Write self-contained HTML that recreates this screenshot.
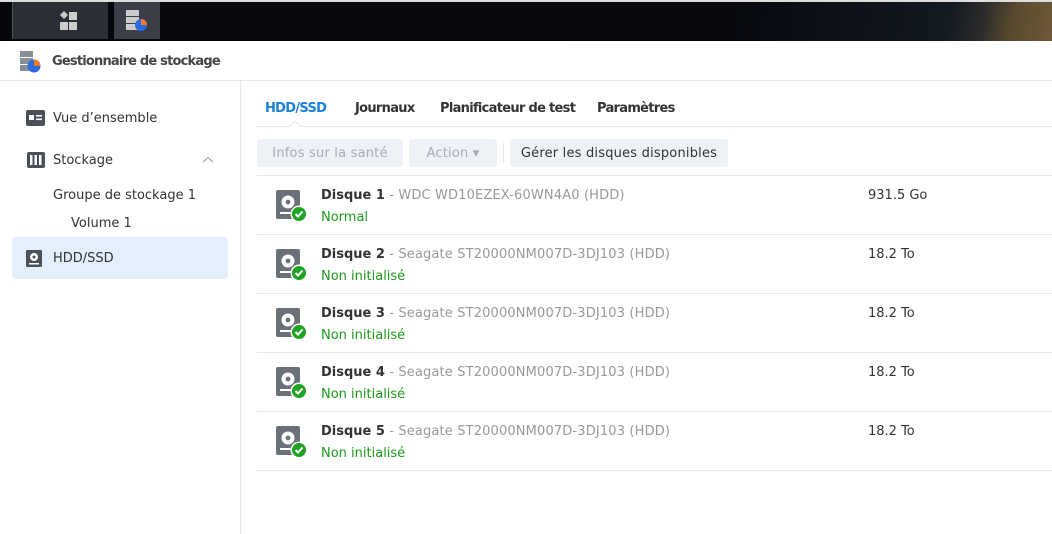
<!DOCTYPE html>
<html><head><meta charset="utf-8"><style>
*{margin:0;padding:0;box-sizing:border-box}
body{width:1052px;height:534px;overflow:hidden;background:#fff;font-family:"DejaVu Sans","Liberation Sans",sans-serif;font-size:13px;color:#333;position:relative}
.top{position:absolute;left:0;top:0;width:1052px;height:41px;background:linear-gradient(100deg,#05070c 0%,#07090f 70%,#141a22 90%,#2a2a2a 93%,#5a4a2e 96%,#6b5836 100%);border-top:2px solid #ddd}
.tb{position:absolute;top:2px;height:37px;background:#2a2e35}
.a{position:absolute}
.sep{position:absolute;background:#e6e8eb}
.nav{position:absolute;left:53px;font-size:13px;color:#333}
.tab{position:absolute;top:101px;font-weight:bold;font-size:13px;color:#333;letter-spacing:-0.7px}
.btn{position:absolute;top:139px;height:28px;border-radius:3px;background:#eef1f5;line-height:29px;text-align:center;font-size:13px;letter-spacing:0.2px}
.row .t{position:absolute;left:321px;font-size:13px;color:#999;letter-spacing:0.15px}
.row .t b{color:#333;letter-spacing:0}
.row .s{position:absolute;left:321px;color:#1a9b1a}
.row .z{position:absolute;left:868px;color:#333}
</style></head><body>
<div class="top"></div>
<div class="tb" style="left:12px;width:96px;border-left:1px solid #555"></div>
<svg class="a" style="left:59px;top:11px" width="20" height="20"><rect x="10" y="1" width="8" height="8" fill="#ccc"/><path d="M5 0L9 4L5 8L1 4Z" fill="#ccc"/><rect x="1" y="11" width="8" height="8" fill="#ccc"/><rect x="10" y="11" width="8" height="8" fill="#ccc"/></svg>
<div class="tb" style="left:114px;width:46px;background:#3a3f47"></div>
<svg class="a" style="left:124px;top:9px" width="26" height="24"><rect x="2" y="1" width="13" height="6" fill="#ccc"/><rect x="2" y="8" width="13" height="6" fill="#ccc"/><rect x="2" y="15" width="13" height="6" fill="#ccc"/><circle cx="17" cy="16" r="6" fill="#2a6be0"/><path d="M17 10A6 6 0 0 1 23 16H17Z" fill="#f07a2a"/></svg>
<svg class="a" style="left:18px;top:50px" width="26" height="24"><rect x="2" y="1" width="13" height="6" fill="#8a8f96"/><rect x="2" y="8" width="13" height="6" fill="#8a8f96"/><rect x="2" y="15" width="13" height="6" fill="#8a8f96"/><circle cx="16" cy="16" r="6.5" fill="#2a6be0"/><path d="M16 9.5A6.5 6.5 0 0 1 22.5 16H16Z" fill="#f07a2a"/></svg>
<div class="a" style="left:52px;top:54px;font-weight:bold;color:#444;letter-spacing:-0.8px">Gestionnaire de stockage</div>
<div class="sep" style="left:0;top:80px;width:1052px;height:1px"></div>
<div class="sep" style="left:240px;top:81px;width:1px;height:453px"></div>
<svg class="a" style="left:26px;top:110px" width="19" height="16"><rect x="0" y="0" width="19" height="16" rx="2" fill="#4b5058"/><rect x="3" y="5" width="5" height="5" fill="#fff"/><rect x="10" y="5" width="6" height="1.6" fill="#fff"/><rect x="10" y="8.5" width="6" height="1.6" fill="#fff"/></svg>
<div class="nav" style="top:111px">Vue d’ensemble</div>
<svg class="a" style="left:27px;top:152px" width="18" height="16"><rect width="18" height="16" rx="2" fill="#4b5058"/><rect x="3" y="3" width="2.5" height="10" fill="#fff"/><rect x="7.5" y="3" width="2.5" height="10" fill="#fff"/><rect x="12" y="3" width="2.5" height="10" fill="#fff"/></svg>
<div class="nav" style="top:153px">Stockage</div>
<svg class="a" style="left:202px;top:156px" width="12" height="8"><path d="M1 6L6 1.5L11 6" stroke="#aaa" fill="none" stroke-width="1.3"/></svg>
<div class="nav" style="top:188px">Groupe de stockage 1</div>
<div class="nav" style="top:216px;left:71px">Volume 1</div>
<div class="a" style="left:12px;top:237px;width:216px;height:42px;background:#e3effc;border-radius:4px"></div>
<svg class="a" style="left:26px;top:250px" width="16" height="17"><rect width="16" height="17" rx="1.5" fill="#4b5058"/><circle cx="8" cy="7" r="4" fill="#fff"/><circle cx="8" cy="7" r="1.5" fill="#4b5058"/><rect x="3" y="13" width="10" height="1.5" fill="#fff"/></svg>
<div class="nav" style="top:251px">HDD/SSD</div>
<div class="tab" style="left:265px;color:#1a7fd9">HDD/SSD</div>
<div class="tab" style="left:355px">Journaux</div>
<div class="tab" style="left:440px">Planificateur de test</div>
<div class="tab" style="left:597px">Paramètres</div>
<div class="sep" style="left:257px;top:126px;width:795px;height:1px"></div>
<svg class="a" style="left:289px;top:121px" width="12" height="7"><path d="M0 6L6 0L12 6" fill="#fff" stroke="#e6e8eb"/></svg>
<div class="btn" style="left:257px;width:146px;color:#aab">Infos sur la santé</div>
<div class="btn" style="left:409px;width:88px;color:#aab">Action ▾</div>
<div class="sep" style="left:503px;top:143px;width:1px;height:20px"></div>
<div class="btn" style="left:510px;width:218px;color:#333">Gérer les disques disponibles</div>
<div class="sep" style="left:257px;top:175px;width:795px;height:1px"></div>
<div id="rows"></div>
<script>
var d=[["1","WDC WD10EZEX-60WN4A0 (HDD)","Normal","931.5 Go"],["2","Seagate ST20000NM007D-3DJ103 (HDD)","Non initialisé","18.2 To"],["3","Seagate ST20000NM007D-3DJ103 (HDD)","Non initialisé","18.2 To"],["4","Seagate ST20000NM007D-3DJ103 (HDD)","Non initialisé","18.2 To"],["5","Seagate ST20000NM007D-3DJ103 (HDD)","Non initialisé","18.2 To"]];
var h="";d.forEach(function(r,i){var y=176+i*59;
h+='<div class="row"><svg class="a" style="left:276px;top:'+(y+14)+'px" width="32" height="34"><rect x="0" y="0" width="24" height="29" rx="2" fill="#6b7078"/><circle cx="12" cy="12" r="6.5" fill="#fff"/><circle cx="12" cy="12" r="2.4" fill="#6b7078"/><rect x="4" y="22" width="12" height="2" fill="#fff"/><circle cx="23" cy="24" r="8.5" fill="#fff"/><circle cx="23" cy="24" r="7" fill="#1fa324"/><path d="M19.5 24L22 26.5L26.5 21.5" stroke="#fff" stroke-width="2" fill="none"/></svg>'+
'<div class="t" style="top:'+(y+12)+'px"><b>Disque '+r[0]+'</b> - '+r[1]+'</div><div class="s" style="top:'+(y+34)+'px">'+r[2]+'</div><div class="z" style="top:'+(y+12)+'px">'+r[3]+'</div></div><div class="sep" style="left:257px;top:'+(y+58)+'px;width:795px;height:1px"></div>';});
document.getElementById("rows").innerHTML=h;
</script>
</body></html>
